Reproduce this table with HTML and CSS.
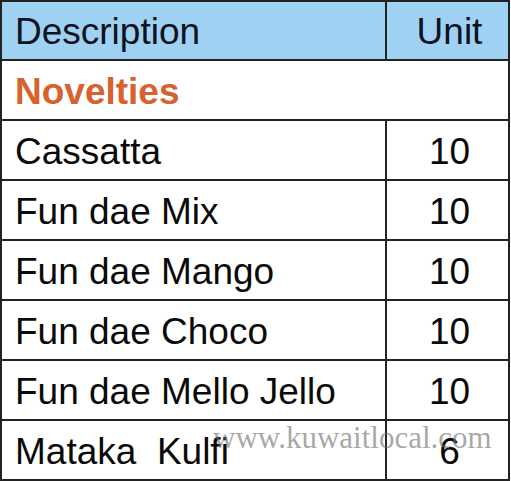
FILE: index.html
```html
<!DOCTYPE html>
<html>
<head>
<meta charset="utf-8">
<link rel="stylesheet" href="styles.css">
</head>
<body>
<div class="sheet">
  <table class="price">
    <thead>
      <tr class="head"><th class="desc">Description</th><th class="unit">Unit</th></tr>
    </thead>
    <tbody>
      <tr class="group"><td colspan="2" class="desc">Novelties</td></tr>
      <tr><td class="desc">Cassatta</td><td class="unit">10</td></tr>
      <tr><td class="desc">Fun dae Mix</td><td class="unit">10</td></tr>
      <tr><td class="desc">Fun dae Mango</td><td class="unit">10</td></tr>
      <tr><td class="desc">Fun dae Choco</td><td class="unit">10</td></tr>
      <tr><td class="desc">Fun dae Mello Jello</td><td class="unit">10</td></tr>
      <tr><td class="desc">Mataka&nbsp; Kulfi</td><td class="unit">6</td></tr>
    </tbody>
  </table>
  <div class="watermark">www.kuwaitlocal.com</div>
</div>
</body>
</html>
```
FILE: styles.css
```css
html, body {
  margin: 0;
  padding: 0;
  background: #ffffff;
}
.sheet {
  position: relative;
  width: 511px;
  height: 481px;
  overflow: hidden;
}
.price {
  border-collapse: collapse;
  width: 510px;
  table-layout: fixed;
  font-family: "Liberation Sans", Arial, sans-serif;
  font-size: 37px;
  color: #0a0a0a;
}
.price th, .price td {
  border: 2px solid #222;
  height: 58px;
  padding: 3px 0 0 13px;
  box-sizing: border-box;
  font-weight: normal;
  line-height: 40px;
  vertical-align: middle;
}
.price th.desc, .price td.desc {
  width: 385px;
  text-align: left;
}
.price th.unit, .price td.unit {
  text-align: center;
  padding: 3px 0 0 4px;
}
.head th {
  background: #9fd1f2;
  color: #0d1320;
  height: 59px;
}
.group td {
  color: #d7612f;
  font-weight: bold;
  height: 60px;
}
.price tbody tr:not(.group) td {
  height: 60px;
}
.watermark {
  position: absolute;
  left: 213px;
  top: 420px;
  font-family: "Liberation Serif", "Times New Roman", serif;
  font-size: 31px;
  color: rgba(110, 110, 110, 0.62);
  white-space: nowrap;
  pointer-events: none;
}
```
